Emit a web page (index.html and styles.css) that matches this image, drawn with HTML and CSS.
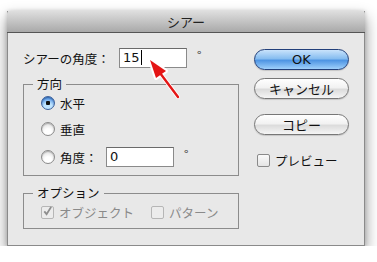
FILE: index.html
```html
<!DOCTYPE html>
<html lang="ja">
<head>
  <meta charset="UTF-8">
  <title>シアー</title>
  <link rel="stylesheet" href="styles.css">
</head>
<body>
  <div class="dialog">
    <div class="titlebar">シアー</div>
    <div class="content">
      <div class="left">
        <div class="angle-row">
          <span class="label">シアーの角度：</span>
          <div class="field wide"><span class="caret">15</span></div>
          <span class="deg">°</span>
        </div>

        <fieldset class="group">
          <legend>方向</legend>
          <div class="rows">
            <div class="row"><span class="radio on"></span><span>水平</span></div>
            <div class="row"><span class="radio"></span><span>垂直</span></div>
            <div class="row">
              <span class="radio"></span><span class="label">角度：</span>
              <div class="field">0</div>
              <span class="deg">°</span>
            </div>
          </div>
        </fieldset>

        <fieldset class="group options">
          <legend>オプション</legend>
          <div class="row dim">
            <span class="check checked">
              <svg width="12" height="12" viewBox="0 0 12 12"><path d="M2.5 6.5 L5 9.5 L10 1.5" fill="none" stroke="#8e8e8e" stroke-width="2"/></svg>
            </span>
            <span class="opt">オブジェクト</span>
            <span class="check"></span>
            <span>パターン</span>
          </div>
        </fieldset>
      </div>

      <div class="right">
        <button class="btn default">OK</button>
        <button class="btn">キャンセル</button>
        <button class="btn copy">コピー</button>
        <div class="row preview"><span class="check"></span><span>プレビュー</span></div>
      </div>
    </div>

    <!-- pointer arrow at the angle field -->
    <svg class="arrow" width="50" height="50" viewBox="0 0 50 50">
      <g stroke="#fff" stroke-width="4" stroke-linecap="round" fill="#fff" stroke-linejoin="round">
        <line x1="33" y1="41" x2="15" y2="17"/>
        <polygon points="5,4 21,15 11,22"/>
      </g>
      <line x1="33" y1="41" x2="15" y2="17" stroke="#e41515" stroke-width="2.4" stroke-linecap="round"/>
      <polygon points="5,4 21,15 11,22" fill="#e41515"/>
    </svg>
  </div>
</body>
</html>
```

FILE: styles.css
```css
body {
  margin: 0;
  background: #fff;
  font-family: "Noto Sans CJK JP", "DejaVu Sans", sans-serif;
  font-size: 12.5px;
  color: #111;
}
.dialog {
  position: relative;
  box-sizing: border-box;
  width: 358px;
  height: 235px;
  margin: 11px 0 0 7px;
  background: #e8e8e8;
  border: 1px solid #8a8a8a;
  border-top: none;
  box-shadow: 0 7px 14px rgba(0,0,0,0.45), 0 0 4px rgba(0,0,0,0.15);
}
.titlebar {
  height: 21px;
  line-height: 21px;
  text-align: center;
  font-size: 13px;
  color: #222;
  background: linear-gradient(#dedede, #a9a9a9);
  border-bottom: 1px solid #555;
  border-radius: 3px 3px 0 0;
  margin: 0 -1px;
}
.content {
  display: flex;
  gap: 15px;
  padding: 0 15px 0 15px;
}
.left {
  width: 216px;
}
.angle-row {
  display: flex;
  align-items: center;
  height: 20px;
  margin-top: 15px;
}
.angle-row .label {
  width: 96px;
}
.field {
  box-sizing: border-box;
  width: 68px;
  height: 20px;
  background: #fff;
  border: 1px solid #8a8a8a;
  border-top-color: #6a6a6a;
  font-family: "DejaVu Sans", sans-serif;
  font-size: 13px;
  line-height: 18px;
  padding-left: 3px;
}
.caret {
  border-right: 1px solid #000;
  padding-right: 1px;
}
.deg {
  margin-left: 10px;
  margin-top: -8px;
  font-size: 12px;
  color: #333;
}
.group {
  margin: 8px 0 0 0;
  padding: 0 0 7px 15px;
  border: 1px solid #8c8c8c;
}
.group legend {
  padding: 0 4px;
  line-height: 16px;
  margin-left: -6px;
}
.rows {
  display: flex;
  flex-direction: column;
  gap: 4px;
}
.rows .row + .row + .row {
  margin-top: 2px;
}
.row {
  display: flex;
  align-items: center;
  height: 22px;
}
.row .label {
  width: 46px;
}
.radio {
  box-sizing: border-box;
  width: 14px;
  height: 14px;
  border-radius: 50%;
  margin: 0 5px 0 2px;
  border: 1px solid #8a8a8a;
  background: radial-gradient(circle at 50% 75%, #ffffff 0 30%, #e6e6e6 70%), #f4f4f4;
  box-shadow: inset 0 1px 1px rgba(0,0,0,0.25);
}
.radio.on {
  border-color: #3b5f9a;
  background: radial-gradient(circle at 50% 50%, #111 0 2px, transparent 2.5px),
              radial-gradient(circle at 50% 85%, #bfe4ff 0 35%, #4d8ee0 80%);
}
.options {
  margin-top: 9px;
  padding-bottom: 5px;
}
.check {
  box-sizing: border-box;
  width: 13px;
  height: 13px;
  margin: 0 5px 0 2px;
  border: 1px solid #8a8a8a;
  border-radius: 2px;
  background: linear-gradient(#fafafa, #e4e4e4);
  display: flex;
  align-items: flex-end;
}
.check svg {
  margin: 0 0 1px 0;
}
.dim {
  color: #8a8a8a;
}
.dim .check {
  border-color: #b6b6b6;
  background: #ececec;
}
.opt {
  margin-right: 15px;
}
.right {
  width: 95px;
  display: flex;
  flex-direction: column;
  padding-top: 16px;
}
.btn {
  height: 21px;
  margin: 0 0 8px 0;
  padding: 0;
  font-family: inherit;
  font-size: 13px;
  color: #111;
  border: 1px solid #777;
  border-radius: 11px;
  background: linear-gradient(#ffffff 0%, #f2f2f2 45%, #dcdcdc 55%, #f5f5f5 100%);
  box-shadow: 0 1px 1px rgba(0,0,0,0.15);
}
.btn.default {
  font-family: "DejaVu Sans", sans-serif;
  border-color: #23407a;
  background: linear-gradient(#c9e3fb 0%, #87bdf0 45%, #4f95e3 55%, #9fd0fb 100%);
}
.btn.copy {
  margin-top: 7px;
}
.preview {
  margin-top: 6px;
}
.preview .check {
  margin-left: 3px;
}
.arrow {
  position: absolute;
  left: 137px;
  top: 45px;
}
```
